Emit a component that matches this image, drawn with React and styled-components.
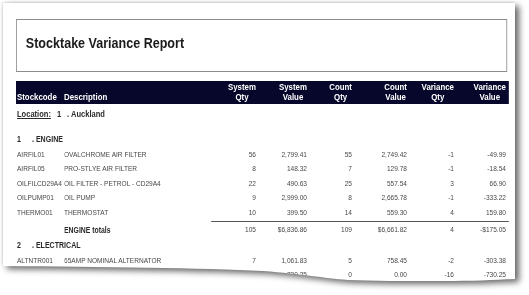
import React from "react";
import styled, { createGlobalStyle } from "styled-components";

const FONT = `"Liberation Sans", Arial, sans-serif`;
const S = 0.82; // the report is photographed horizontally condensed
const w = (px) => `${(px / S).toFixed(2)}px`;

const Global = createGlobalStyle`
  html, body { margin: 0; padding: 0; background: #ffffff; }
  body { width: 529px; height: 295px; overflow: hidden; font-family: ${FONT}; }
`;

const Stage = styled.div`
  padding: 3px 0 0 3px;
`;

const Shadow = styled.div`
  width: 512px;
  filter: drop-shadow(-1px -1px 1px rgba(0, 0, 0, 0.12)) drop-shadow(4px 3px 3px rgba(0, 0, 0, 0.6));
`;

const Page = styled.div`
  width: 512px;
  height: 282px;
  box-sizing: border-box;
  background: #ffffff;
  padding: 16px 0 0 13px;
  overflow: hidden;
  clip-path: path("M0 0 H512 V276 C 490 277, 470 278, 440 278 C 400 278, 370 278, 345 277 C 320 275, 300 271, 260 268 C 200 265, 100 264, 0 263 Z");
`;

const Condensed = styled.div`
  width: ${w(496)};
  transform: scaleX(${S});
  transform-origin: 0 0;
`;

const TitleBox = styled.div`
  width: ${w(491)};
  height: 53px;
  box-sizing: border-box;
  border: 1px solid #8c8c8c;
  border-width: 1px ${w(1)};
  display: flex;
  align-items: center;
  padding: 0 0 6px ${w(9)};
`;

const Title = styled.h1`
  margin: 0;
  font-family: ${FONT};
  font-size: 15.3px;
  font-weight: 700;
  color: #1c1c1c;
`;

const Table = styled.div`
  margin-top: 9px;
  width: ${w(493)};
  display: flex;
  flex-direction: column;
`;

const COLS = [47, 147, 45, 51, 45, 55, 47, 52].map(w).join(" ");

const HeaderBar = styled.div`
  display: grid;
  grid-template-columns: ${COLS};
  align-items: end;
  height: 23px;
  box-sizing: border-box;
  padding: 0 ${w(3)} 2px ${w(1)};
  background: #07072c;
  color: #ffffff;
  font-size: 9.6px;
  font-weight: 700;
  line-height: 10px;
`;

const HeadCell = styled.div`
  justify-self: ${(p) => (p.$num ? "end" : "start")};
  text-align: center;
  white-space: nowrap;
`;

const Row = styled.div`
  display: grid;
  grid-template-columns: ${COLS};
  align-items: center;
  height: ${(p) => p.$h || 14.5}px;
  padding: 0 ${w(3)} 0 ${w(1)};
  font-size: 8px;
  color: #474747;
`;

const Cell = styled.div`
  text-align: ${(p) => (p.$num ? "right" : "left")};
  white-space: nowrap;
  overflow: hidden;
  font-weight: ${(p) => (p.$bold ? 700 : 400)};
  font-size: ${(p) => (p.$bold ? "8.4px" : "inherit")};
  color: ${(p) => (p.$bold ? "#2a2a2a" : "inherit")};
`;

const Location = styled.div`
  display: flex;
  align-items: center;
  height: 20px;
  padding-left: ${w(1)};
  font-size: 9.2px;
  font-weight: 700;
  color: #2a2a2a;
`;

const LocLabel = styled.span`
  text-decoration: underline;
  width: ${w(40)};
`;

const LocNum = styled.span`
  width: ${w(8)};
`;

const Group = styled.div`
  display: flex;
  align-items: center;
  height: 16px;
  padding-left: ${w(1)};
  margin-top: ${(p) => p.$mt || 0}px;
  font-size: 8.6px;
  font-weight: 700;
  color: #2a2a2a;
`;

const GroupNum = styled.span`
  width: ${w(15)};
`;

const Rule = styled.div`
  height: 1px;
  background: #555555;
  margin: 1.5px 0 0 ${w(195)};
`;

const headers = [
  ["Stockcode"],
  ["Description"],
  ["System", "Qty"],
  ["System", "Value"],
  ["Count", "Qty"],
  ["Count", "Value"],
  ["Variance", "Qty"],
  ["Variance", "Value"],
];

const engine = [
  ["AIRFIL01", "OVALCHROME AIR FILTER", "56", "2,799.41", "55", "2,749.42", "-1", "-49.99"],
  ["AIRFIL05", "PRO-STLYE AIR FILTER", "8", "148.32", "7", "129.78", "-1", "-18.54"],
  ["OILFILCD29A4", "OIL FILTER - PETROL - CD29A4", "22", "490.63", "25", "557.54", "3", "66.90"],
  ["OILPUMP01", "OIL PUMP", "9", "2,999.00", "8", "2,665.78", "-1", "-333.22"],
  ["THERMO01", "THERMOSTAT", "10", "399.50", "14", "559.30", "4", "159.80"],
];

const electrical = [
  ["ALTNTR001", "65AMP NOMINAL ALTERNATOR", "7", "1,061.83", "5", "758.45", "-2", "-303.38"],
  ["", "", "16", "730.25", "0", "0.00", "-16", "-730.25"],
];

const DataRow = ({ cells, bold, h }) => (
  <Row $h={h}>
    {cells.map((c, i) => (
      <Cell key={i} $num={i > 1} $bold={bold && i < 2}>
        {c}
      </Cell>
    ))}
  </Row>
);

export default function App() {
  return (
    <>
      <Global />
      <Stage>
        <Shadow>
          <Page>
            <Condensed>
              <TitleBox>
                <Title>Stocktake Variance Report</Title>
              </TitleBox>
              <Table>
                <HeaderBar>
                  {headers.map((h, i) => (
                    <HeadCell key={i} $num={i > 1}>
                      {h.map((line, j) => (
                        <div key={j}>{line}</div>
                      ))}
                    </HeadCell>
                  ))}
                </HeaderBar>
                <Location>
                  <LocLabel>Location:</LocLabel>
                  <LocNum>1</LocNum>
                  <span>&nbsp;. Auckland</span>
                </Location>
                <Group $mt={7}>
                  <GroupNum>1</GroupNum>
                  <span>. ENGINE</span>
                </Group>
                {engine.map((r) => (
                  <DataRow key={r[0]} cells={r} />
                ))}
                <Rule />
                <DataRow
                  h={15}
                  bold
                  cells={["", "ENGINE totals", "105", "$6,836.86", "109", "$6,661.82", "4", "-$175.05"]}
                />
                <Group>
                  <GroupNum>2</GroupNum>
                  <span>. ELECTRICAL</span>
                </Group>
                {electrical.map((r, i) => (
                  <DataRow key={i} cells={r} />
                ))}
              </Table>
            </Condensed>
          </Page>
        </Shadow>
      </Stage>
    </>
  );
}
